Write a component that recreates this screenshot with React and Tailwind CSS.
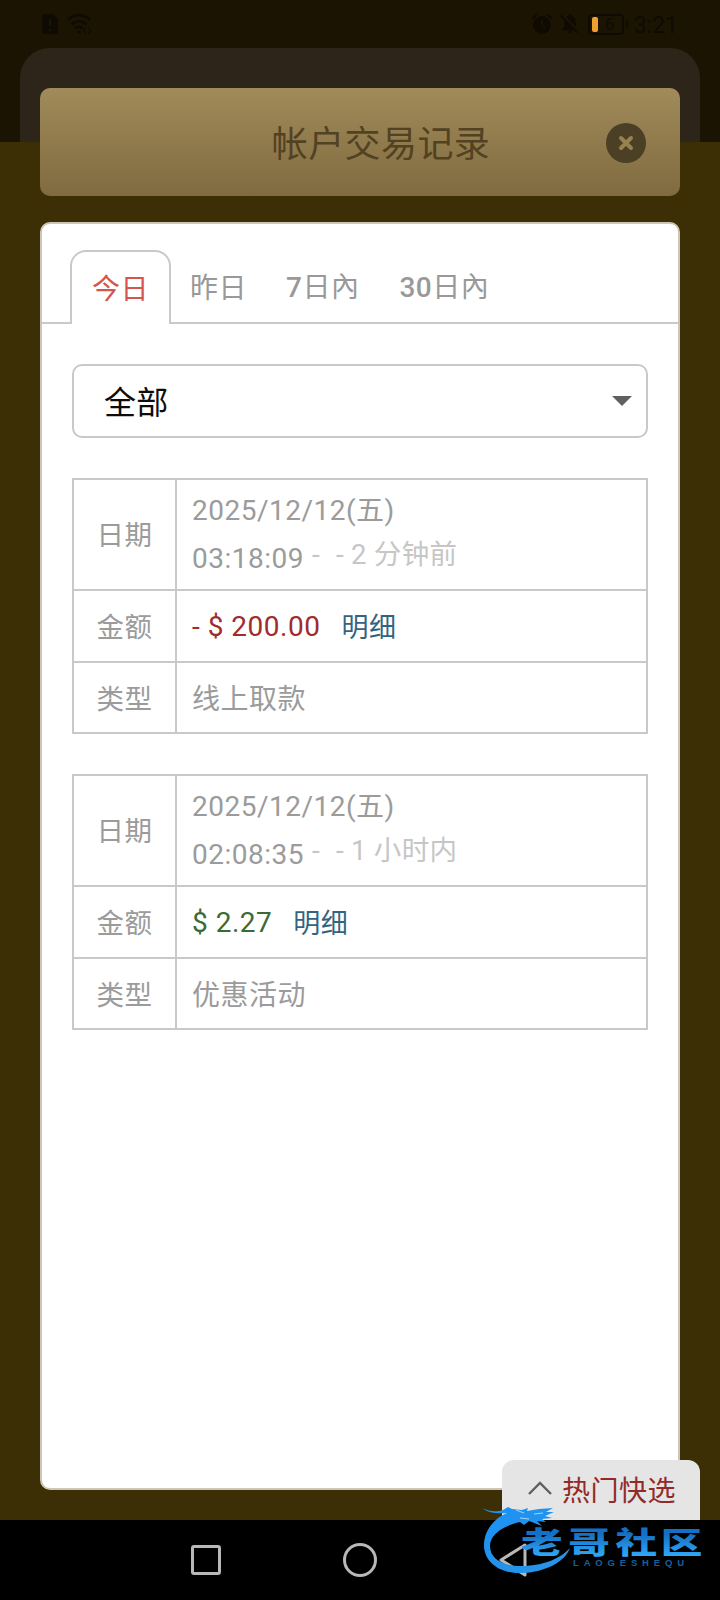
import React from "react";

const records = [
  {
    date: "2025/12/12(五)",
    time: "03:18:09",
    ago: "2 分钟前",
    amount: "- $ 200.00",
    tone: "text-[#a02c2c]",
    type: "线上取款",
  },
  {
    date: "2025/12/12(五)",
    time: "02:08:35",
    ago: "1 小时内",
    amount: "$ 2.27",
    tone: "text-[#3a6b33]",
    type: "优惠活动",
  },
];

function StatusBar() {
  return (
    <div className="flex h-12 items-center justify-between pl-10 pr-[42px] text-[#0f0b02]">
      <div className="flex items-center gap-2">
        <svg width="18" height="22" viewBox="0 0 18 22" className="ml-[1px]">
          <path d="M2 1h10l5 5v13a2 2 0 0 1-2 2H3a2 2 0 0 1-2-2V2z" fill="currentColor" />
          <path d="M9 6v7M9 15.500v2.500" stroke="#1c1503" strokeWidth="2" />
        </svg>
        <svg width="26" height="22" viewBox="0 0 26 22" fill="none" stroke="currentColor" strokeWidth="2.600">
          <path d="M1 7c6-6.500 16-6.500 22 0M4.500 11.500c4-4.300 11-4.300 15 0M8 15.500c2.300-2.300 5.700-2.300 8 0" />
          <circle cx="12" cy="19" r="1.800" fill="currentColor" stroke="none" />
          <path d="M19 15l-2 3 2 3M21.500 15l2 3-2 3" strokeWidth="1.300" />
        </svg>
      </div>
      <div className="flex items-center">
        <svg width="22" height="22" viewBox="0 0 22 22" fill="none" stroke="currentColor">
          <circle cx="11" cy="12" r="9" fill="currentColor" stroke="none" />
          <path d="M1.500 5.500l4-4M20.500 5.500l-4-4" strokeWidth="2" />
          <path d="M11 7v5.500l3 2.500" stroke="#1c1503" strokeWidth="1.600" />
        </svg>
        <svg width="20" height="20" viewBox="0 0 20 20" className="ml-[7px]">
          <path d="M10 0c1 0 1.500.7 1.500 1.700C14.500 2.500 16 5 16 8v5l2 2.500v1H2v-1L4 13V8c0-3 1.500-5.500 4.500-6.300C8.500.7 9 0 10 0zM8 17.500h4a2 2 0 0 1-4 0z" fill="currentColor" />
          <path d="M2 1l17 17" stroke="#1c1503" strokeWidth="2.500" />
          <path d="M.5 1.500l17 17" stroke="currentColor" strokeWidth="1.800" />
        </svg>
        <div className="ml-2 flex h-[21px] w-[36px] items-center rounded-[4px] border-2 border-current pl-[2px]">
          <div className="h-[15px] w-[6px] rounded-[2px] bg-[#f0a030]" />
          <span className="ml-[7px] text-[17px] leading-none">6</span>
        </div>
        <div className="ml-[2px] h-2 w-[2px] bg-current" />
        <span className="ml-[6px] mt-[2px] text-[23px] leading-none">3:21</span>
      </div>
    </div>
  );
}

function Cell({ children, className = "" }) {
  return <div className={"flex items-center " + className}>{children}</div>;
}

function Record({ item }) {
  return (
    <div className="grid h-[256px] grid-cols-[101px_1fr] grid-rows-[109px_70px_69px] gap-[2px] border-2 border-[#c9c9c9] bg-[#c9c9c9] text-[28px] leading-[48px] tracking-[0.5px] text-[#9b9b9b] *:bg-white">
      <Cell className="justify-center pt-[2px] text-[27.5px]">日期</Cell>
      <Cell className="pl-[15px]">
        <div>
          <div>{item.date}</div>
          <div className="flex whitespace-pre">
            {item.time}
            <span className="relative -top-[4px] flex text-[#c6c6c6]">
              <span className="ml-2 w-[24px]">-</span>
              <span className="w-[15px]">-</span>
              <span className="text-[27.5px] tracking-[0.3px]">{item.ago}</span>
            </span>
          </div>
        </div>
      </Cell>
      <Cell className="justify-center pt-1 text-[27.5px]">金额</Cell>
      <Cell className="gap-[21px] pl-[15px] pt-[2px]">
        <span className={item.tone}>{item.amount}</span>
        <a className="pt-[2px] text-[27px] text-[#33647f]">明细</a>
      </Cell>
      <Cell className="justify-center pt-1 text-[27.5px]">类型</Cell>
      <Cell className="pl-[15px] pt-1">{item.type}</Cell>
    </div>
  );
}

function Logo() {
  return (
    <svg
      className="absolute left-[480px] top-[1500px]"
      width="230"
      height="76"
      viewBox="480 1500 230 76"
    >
      <defs>
        <linearGradient id="glyphs" x1="0" y1="0" x2="0" y2="1">
          <stop offset="0.25" stopColor="#1470c4" />
          <stop offset="1" stopColor="#35b0ff" />
        </linearGradient>
        <linearGradient id="ring" x1="0" y1="0" x2="1" y2="1">
          <stop offset="0" stopColor="#1c92f4" />
          <stop offset="1" stopColor="#2794e6" />
        </linearGradient>
      </defs>
      <path
        d="M482 1508c8 4 15 4 21 2l5-3 4 2 10 1 6-2-1 3 12-2 14-1-7 4 8 0-9 4 7 2-10 1 4 3-9-1 5 5-13-5-5 4-4-3c-18 4-30 13-30 24 0 15 17 21 35 20 20-1 36-8 45-18-5 14-25 24-47 25-25 1-39-12-39-28 0-14 10-27 23-32-8 1-19 0-25-5z"
        fill="url(#ring)"
      />
      <path d="M516 1510l8 3M520 1518l9 1M534 1514l9-1" stroke="#a8d4f5" strokeWidth="1" />
      <g
        transform="translate(521 1553) scale(1.26 .9)"
        fontFamily="'Liberation Sans', 'Noto Sans CJK SC', sans-serif"
        fontSize="33"
        fontWeight="900"
        fill="url(#glyphs)"
      >
        <text x="0 37.500 75 111" y="0">老哥社区</text>
      </g>
      <text x="573" y="1566" fontFamily="'Liberation Sans', sans-serif" fontSize="9.500" fontWeight="bold" fill="#14609c" textLength="111">
        LAOGESHEQU
      </text>
    </svg>
  );
}

export default function App() {
  return (
    <div className="relative flex h-[1600px] w-[720px] flex-col overflow-hidden bg-[#3c2f06] font-['Roboto','Noto_Sans_CJK_SC',sans-serif]">
      <div className="absolute inset-x-0 top-0 h-[142px] bg-[#1c1403] px-5 pt-12">
        <div className="h-full rounded-t-[30px] bg-[#2d2519]" />
      </div>
      <div className="relative flex grow flex-col">
        <StatusBar />
        <header className="mx-10 mt-10 grid h-[108px] grid-cols-[1fr_auto_1fr] items-center rounded-[10px] bg-linear-to-b from-[#a18b5a] to-[#806b40] pr-[34px]">
          <span />
          <h1 className="pl-[76px] pt-[5px] text-[36px] tracking-[0.4px] text-[#524222]">帐户交易记录</h1>
          <button className="mt-[2px] flex size-10 items-center justify-center justify-self-end rounded-full bg-[#4b3f26]">
            <svg width="16" height="16" viewBox="0 0 16 16" stroke="#97814f" strokeWidth="4" strokeLinecap="round">
              <path d="M3 3l10 10M13 3L3 13" />
            </svg>
          </button>
        </header>
        <main className="mx-10 mb-[30px] mt-[26px] flex grow flex-col rounded-[10px] border-2 border-[#cdc6b6] bg-white">
          <nav className="flex h-[100px] items-end border-b-2 border-[#c9c9c9] text-[28px] leading-[64px] tracking-[0.5px] text-[#999]">
            <div className="-mb-[2px] ml-7 flex h-[74px] w-[101px] justify-center rounded-t-[16px] border-2 border-b-0 border-[#c9c9c9] bg-white pt-[6px] text-[#d4544f]">
              今日
            </div>
            <div className="ml-[19px] pb-[1px]">昨日</div>
            <div className="ml-[39px] pb-[2px]">
              <span className="font-medium">7</span>日內
            </div>
            <div className="ml-[40px] pb-[2px]">
              <span className="font-medium">30</span>日內
            </div>
          </nav>
          <div className="flex flex-col gap-10 px-[30px] pt-10">
            <div className="flex h-[74px] items-center justify-between rounded-[10px] border-2 border-[#c9c9c9] pl-[30px] pr-[14px] text-[32px] tracking-[0.3px] text-[#0c0c0c]">
              <span className="pt-1">全部</span>
              <svg width="20" height="10" viewBox="0 0 20 10">
                <path d="M0 0h20L10 10z" fill="#606060" />
              </svg>
            </div>
            {records.map((item) => (
              <Record key={item.time} item={item} />
            ))}
          </div>
        </main>
      </div>
      <button className="absolute bottom-[80px] right-5 flex h-[60px] w-[198px] items-center rounded-t-[12px] bg-[#e5e5e5] pl-[26px] text-[28px] tracking-[0.5px] text-[#922b28]">
        <svg width="24" height="14" viewBox="0 0 24 14" fill="none" stroke="#606060" strokeWidth="2.400" className="-mt-1 mr-[10px]">
          <path d="M1 13L12 2l11 11" />
        </svg>
        <span className="pt-1">热门快选</span>
      </button>
      <footer className="flex h-20 items-center bg-black pl-[191px]">
        <div className="size-[30px] rounded-[3px] border-[3px] border-[#b8b8b8]" />
        <div className="ml-[122px] size-[34px] rounded-full border-[3px] border-[#b8b8b8]" />
        <svg width="28" height="34" viewBox="0 0 28 34" fill="none" stroke="#b8b8b8" strokeWidth="3" strokeLinejoin="round" className="ml-[122px]">
          <path d="M26 2v30L2 17z" />
        </svg>
      </footer>
      <Logo />
    </div>
  );
}
